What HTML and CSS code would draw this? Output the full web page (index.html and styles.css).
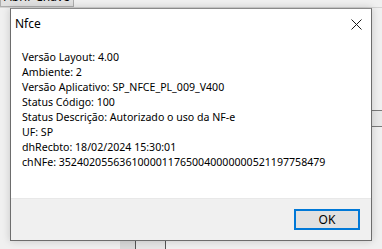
FILE: index.html
```html
<!DOCTYPE html>
<html lang="pt-BR">
<head>
   <meta charset="UTF-8">
   <title>Nfce</title>
   <link rel="stylesheet" href="styles.css">
</head>
<body>
   <!-- janela de fundo -->
   <div class="main-window">
       <div class="toolbar">
           <button class="tool-button">Abrir Chave</button>
       </div>
       <div class="side-field"></div>
       <div class="bottom-tabs">
           <span class="bottom-tab bottom-tab-dark"></span>
           <span class="bottom-tab"></span>
       </div>
   </div>

   <!-- caixa de mensagem -->
   <div class="dialog">
       <div class="dialog-header">
           <span class="dialog-title">Nfce</span>
           <span class="dialog-close">
               <svg width="11" height="11" viewBox="0 0 11 11">
                   <path d="M0.5 0.5 L10.5 10.5 M10.5 0.5 L0.5 10.5" stroke="#1a1a1a" stroke-width="1" fill="none"/>
               </svg>
           </span>
       </div>
       <div class="dialog-body">
           <p>Versão Layout: 4.00</p>
           <p>Ambiente: 2</p>
           <p>Versão Aplicativo: SP_NFCE_PL_009_V400</p>
           <p>Status Código: 100</p>
           <p>Status Descrição: Autorizado o uso da NF-e</p>
           <p>UF: SP</p>
           <p>dhRecbto: 18/02/2024 15:30:01</p>
           <p>chNFe: 35240205563610000117650040000000521197758479</p>
       </div>
       <div class="dialog-footer">
           <button class="ok-button">OK</button>
       </div>
   </div>
</body>
</html>
```

FILE: styles.css
```css
:root {
    --window-bg: #f0f0f0;
    --button-bg: #e1e1e1;
    --border-dark: #6d6d6d;
    --accent: #0078d7;
    --text: #000000;
}

* {
    margin: 0;
    padding: 0;
    box-sizing: border-box;
}

body {
    width: 382px;
    height: 249px;
    overflow: hidden;
    background: var(--window-bg);
    font-family: 'Segoe UI', 'Noto Sans', sans-serif;
    font-size: 10.6px;
    color: var(--text);
    position: relative;
}

/* janela de fundo */
.main-window {
    height: 100%;
    display: flex;
    flex-direction: column;
}

.toolbar {
    height: 8px;
    overflow: hidden;
    border-bottom: 1px solid #d4d4d4;
}

.tool-button {
    display: block;
    width: 74px;
    height: 20px;
    margin-top: -13px;
    background: var(--button-bg);
    border: 1px solid #adadad;
    font: inherit;
    font-size: 12px;
    line-height: 18px;
    color: var(--text);
}

.side-field {
    align-self: flex-end;
    width: 10px;
    height: 17px;
    margin-top: 102px;
    background: #e8e8e8;
    border-top: 1px solid #7a7a7a;
    border-bottom: 1px solid #7a7a7a;
}

.bottom-tabs {
    margin-top: auto;
    height: 9px;
    display: flex;
    padding-left: 120px;
}

.bottom-tab {
    width: 30px;
    border-right: 1px solid #555555;
    background: #e6e6e6;
}

.bottom-tab-dark {
    width: 16px;
    background: #d9d9d9;
}

/* caixa de mensagem */
.dialog {
    position: absolute;
    left: 10px;
    top: 8px;
    width: 362px;
    height: 233px;
    background: #ffffff;
    border: 1px solid var(--border-dark);
    border-top-color: #8a8a8a;
    box-shadow: 0 0 8px rgba(0,0,0,0.18);
    display: flex;
    flex-direction: column;
}

.dialog-header {
    height: 29px;
    display: flex;
    align-items: center;
    justify-content: space-between;
    padding: 0 9px 0 4px;
}

.dialog-title {
    font-size: 12px;
}

.dialog-close {
    width: 11px;
    height: 11px;
    display: flex;
    margin-top: 1px;
}

.dialog-body {
    flex: 1;
    padding: 12px 10px 0 11px;
    line-height: 15px;
}

.dialog-footer {
    height: 42px;
    background: var(--window-bg);
    border-top: 1px solid #e8e8e8;
    display: flex;
    align-items: center;
    justify-content: flex-end;
    padding-right: 11px;
}

.ok-button {
    width: 66px;
    height: 21px;
    background: var(--button-bg);
    border: 2px solid var(--accent);
    font: inherit;
    font-size: 12px;
    color: var(--text);
    margin-bottom: 1px;
}
```
